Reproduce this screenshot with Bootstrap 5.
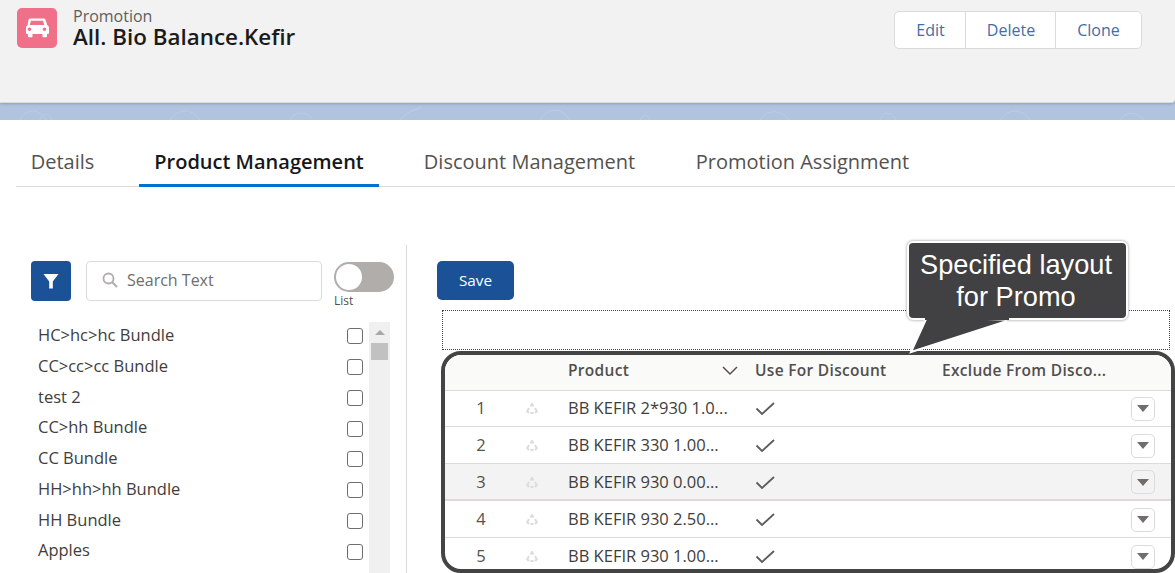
<!DOCTYPE html>
<html lang="en">
<head>
    <meta charset="UTF-8">
    <meta name="viewport" content="width=device-width, initial-scale=1">
    <title>Promotion - All. Bio Balance.Kefir</title>
    <link href="https://cdn.jsdelivr.net/npm/bootstrap@5.3.0/dist/css/bootstrap.min.css" rel="stylesheet">
    <style>
        html, body {
            height: 573px;
            overflow: hidden;
        }
        body {
            position: relative;
            background: #fff;
            color: #3e3e3c;
            font-family: "Open Sans", "Liberation Sans", sans-serif;
            font-size: 14px;
        }
        .band {
            height: 120px;
            background: #b0c4df;
            overflow: hidden;
        }
        .record-head {
            height: 103px;
            background: #f2f2f2;
            border-bottom: 1px solid #dddbda;
            border-bottom-right-radius: 4px;
            box-shadow: 0 1px 3px rgba(0, 0, 0, .2);
            padding: 8px 33px 0 17px;
        }
        .record-icon {
            width: 40px;
            height: 40px;
            background: #f0708a;
            border-radius: 5px;
        }
        .record-type {
            font-size: 16px;
            line-height: 17px;
            color: #5f5e5c;
        }
        .record-name {
            font-size: 22.4px;
            font-weight: 600;
            line-height: 24px;
            color: #1b1b1b;
        }
        .head-btns {
            margin-top: 3px;
            background: #fff;
            border: 1px solid #dddbda;
            border-radius: 5px;
            height: 38px;
        }
        .head-btns .btn {
            color: #3f6ea8;
            font-size: 16px;
            background: none;
            border: 0;
            border-left: 1px solid #dddbda;
            border-radius: 0;
            padding: 0;
            height: 36px;
        }
        .head-btns .btn:first-child {
            border-left: 0;
        }
        .tabs-bar {
            margin: 0 0 0 16px;
            height: 67px;
            border-bottom: 1px solid #dddbda;
            align-items: flex-end;
        }
        .tab-item {
            height: 46px;
            padding-top: 12px;
            font-size: 20px;
            line-height: 20px;
            color: #54524f;
            text-align: center;
        }
        .tab-on {
            color: #16171a;
            font-weight: 600;
            border-bottom: 3px solid #0070d2;
            margin-bottom: -1px;
            height: 47px;
        }
        .work-area {
            margin-top: 58px;
            height: 328px;
        }
        .left-pane {
            width: 407px;
            padding: 16px 12px 0 31px;
            border-right: 1px solid #dddbda;
            flex: none;
        }
        .filter-btn {
            width: 40px;
            height: 40px;
            background: #1b5297;
            border-radius: 4px;
            flex: none;
        }
        .search-box {
            width: 236px;
            height: 40px;
            margin-left: 15px;
            border: 1px solid #dddbda;
            border-radius: 4px;
            padding: 0 0 2px 15px;
            color: #706e6b;
            font-size: 16px;
            flex: none;
        }
        .search-box svg {
            margin-right: 9px;
        }
        .toggle-wrap {
            margin-left: 12px;
            width: 60px;
            flex: none;
        }
        .toggle-track {
            width: 60px;
            height: 30px;
            margin-top: 1px;
            background: #b0adab;
            border-radius: 15px;
            padding: 2px;
        }
        .toggle-knob {
            width: 26px;
            height: 26px;
            background: #fff;
            border-radius: 50%;
        }
        .toggle-label {
            font-size: 12px;
            line-height: 14px;
            margin-top: 2px;
            color: #54524f;
        }
        .bundle-wrap {
            margin-top: 14px;
            height: 258px;
            overflow: hidden;
        }
        .bundle-list {
            width: 338px;
            margin-top: -1px;
            padding: 0 0 0 7px;
            flex: none;
        }
        .bundle-row {
            height: 30.75px;
            font-size: 16.5px;
            color: #3e3e3c;
            padding-right: 6px;
        }
        .bundle-row span {
            position: relative;
            top: -1px;
        }
        .fake-check {
            width: 16px;
            height: 16px;
            border: 1px solid #706e6b;
            border-radius: 3px;
            background: #fff;
        }
        .scroll-rail {
            width: 21px;
            background: #f0f0f0;
            padding: 8px 2px 0;
            flex: none;
        }
        .scroll-arrow {
            width: 0;
            height: 0;
            margin: 0 auto 8px;
            border-left: 5px solid transparent;
            border-right: 5px solid transparent;
            border-bottom: 5px solid #a8a8a8;
        }
        .scroll-thumb {
            height: 17px;
            background: #c1c1c1;
        }
        .right-pane {
            flex: 1;
            padding: 16px 0 0 30px;
            min-width: 0;
        }
        .save-btn {
            width: 77px;
            height: 39px;
            background: #1b5297;
            border: 0;
            border-radius: 5px;
            color: #fff;
            font-size: 15.300px;
            font-weight: 500;
            padding: 0;
        }
        .dotted-box {
            margin: 10px 5px 0 5px;
            height: 40px;
            border: 1px dotted #3e3e3c;
        }
        .grid-frame {
            margin: 1px 0 0 4px;
            height: 222px;
            border: 4px solid #444;
            border-radius: 20px;
            overflow: hidden;
        }
        .grid-frame .table {
            table-layout: fixed;
            width: 100%;
            margin: 0;
            color: #3e3e3c;
        }
        .grid-frame th, .grid-frame td {
            padding: 0;
            border-bottom: 1px solid #dddbda;
            vertical-align: middle;
            white-space: nowrap;
            font-size: 16.5px;
        }
        .grid-frame th {
            height: 35px;
            padding-bottom: 3px;
            background: #fafaf9;
            font-size: 15.500px;
            font-weight: 600;
            color: #514f4d;
            letter-spacing: .3px;
            box-shadow: none;
        }
        .grid-frame td {
            height: 37px;
            padding-top: 2px;
        }
        .grid-frame tbody tr:first-child td {
            height: 36px;
            padding-top: 1px;
        }
        .grid-frame tr.row-hot td {
            background: #f3f3f3;
            border-top: 1px solid #dddbda;
            border-bottom-width: 2px;
        }
        .row-num {
            text-align: center;
            color: #54524f;
        }
        .row-menu {
            width: 24px;
            height: 24px;
            margin-left: 5px;
            border: 1px solid #dddbda;
            border-radius: 5px;
            background: #fff;
        }
        .row-hot .row-menu {
            background: #f3f3f3;
        }
        .row-menu span {
            width: 0;
            height: 0;
            border-left: 6px solid transparent;
            border-right: 6px solid transparent;
            border-top: 7px solid #706e6b;
        }
        .recycle-mark {
            margin-left: 9px;
        }
        .sort-mark {
            margin-right: 17px;
        }
        .callout {
            position: absolute;
            left: 907px;
            top: 241px;
            width: 221px;
            height: 79px;
            background: #414042;
            border: 2px solid #fff;
            border-radius: 6px;
            box-shadow: 0 0 3px rgba(0, 0, 0, .45);
            color: #fff;
            font-family: "Liberation Sans", Arial, sans-serif;
            font-size: 27.2px;
            line-height: 32px;
            text-align: center;
            padding: 6px 3px 0 0;
        }
        .callout-tail {
            position: absolute;
            left: 905px;
            top: 315px;
            width: 110px;
            height: 42px;
        }
    </style>
</head>
<body>

<div class="band">
    <div class="record-head d-flex justify-content-between">
        <div class="d-flex">
            <div class="record-icon d-flex align-items-center justify-content-center">
                <svg width="26" height="24" viewBox="0 0 26 24"><path fill="#fff" d="M6.500 2.500h13c1 0 1.800.6 2.100 1.500l1.700 5.200c1.100.4 1.700 1.300 1.700 2.500v5c0 .8-.5 1.300-1.200 1.300h-.8v2.200c0 .6-.5 1-1 1h-2.500c-.6 0-1-.4-1-1V18H8.500v2.200c0 .6-.4 1-1 1H5c-.5 0-1-.4-1-1V18h-.8c-.7 0-1.200-.5-1.200-1.300v-5c0-1.200.6-2.100 1.700-2.500L4.400 4c.3-.9 1.100-1.500 2.100-1.500zM7 4.800 5.700 9h14.600L19 4.800zM5.500 11.500a1.800 1.800 0 1 0 0 3.600 1.800 1.800 0 0 0 0-3.600zm15 0a1.800 1.800 0 1 0 0 3.600 1.800 1.800 0 0 0 0-3.600z" fill-rule="evenodd"/></svg>
            </div>
            <div class="ms-3">
                <div class="record-type">Promotion</div>
                <div class="record-name">All. Bio Balance.Kefir</div>
            </div>
        </div>
        <div class="head-btns btn-group align-self-start" role="group">
            <button class="btn" style="width:71px">Edit</button>
            <button class="btn" style="width:91px">Delete</button>
            <button class="btn" style="width:86px">Clone</button>
        </div>
    </div>
    <svg class="d-block" width="1175" height="17"><g fill="none" stroke="#bccde4" stroke-width="1"><path d="M20 17c5-12 20-12 26 0M40 17c3-8 10-8 12 0M170 17c10-14 24-10 30 0M290 17c4-8 14-10 22-2M400 17c10-12 16-8 22-14M540 17c8-12 20-14 30 0M640 17c4-6 8-6 10 0M760 17c6-10 18-12 30 0M880 17c4-10 12-8 16 0M1000 17c8-12 22-12 30 0M1120 17c6-8 14-10 24 0"/></g></svg>
</div>

<div class="tabs-bar d-flex">
    <div class="tab-item" style="width:123px;padding-right:30px">Details</div>
    <div class="tab-item tab-on" style="width:240px">Product Management</div>
    <div class="tab-item" style="width:301px">Discount Management</div>
    <div class="tab-item" style="width:245px">Promotion Assignment</div>
</div>

<div class="work-area d-flex">
    <div class="left-pane">
        <div class="d-flex">
            <div class="filter-btn d-flex align-items-center justify-content-center">
                <svg width="16" height="16" viewBox="0 0 16 16"><path fill="#fff" d="M.5 1h15L9.800 8.500V15.500H6.200V8.500z"/></svg>
            </div>
            <div class="search-box d-flex align-items-center">
                <svg width="16" height="16" viewBox="0 0 16 16"><circle cx="6.500" cy="6.500" r="5" fill="none" stroke="#b0adab" stroke-width="1.800"/><path d="M10 10l5 5" stroke="#b0adab" stroke-width="2"/></svg>
                <span>Search Text</span>
            </div>
            <div class="toggle-wrap">
                <div class="toggle-track"><div class="toggle-knob"></div></div>
                <div class="toggle-label">List</div>
            </div>
        </div>
        <div class="bundle-wrap d-flex">
            <div class="bundle-list">
                <div class="bundle-row d-flex align-items-center justify-content-between"><span>HC&gt;hc&gt;hc Bundle</span><div class="fake-check"></div></div>
                <div class="bundle-row d-flex align-items-center justify-content-between"><span>CC&gt;cc&gt;cc Bundle</span><div class="fake-check"></div></div>
                <div class="bundle-row d-flex align-items-center justify-content-between"><span>test 2</span><div class="fake-check"></div></div>
                <div class="bundle-row d-flex align-items-center justify-content-between"><span>CC&gt;hh Bundle</span><div class="fake-check"></div></div>
                <div class="bundle-row d-flex align-items-center justify-content-between"><span>CC Bundle</span><div class="fake-check"></div></div>
                <div class="bundle-row d-flex align-items-center justify-content-between"><span>HH&gt;hh&gt;hh Bundle</span><div class="fake-check"></div></div>
                <div class="bundle-row d-flex align-items-center justify-content-between"><span>HH Bundle</span><div class="fake-check"></div></div>
                <div class="bundle-row d-flex align-items-center justify-content-between"><span>Apples</span><div class="fake-check"></div></div>
            </div>
            <div class="scroll-rail">
                <div class="scroll-arrow"></div>
                <div class="scroll-thumb"></div>
            </div>
        </div>
    </div>
    <div class="right-pane">
        <button class="save-btn d-block">Save</button>
        <div class="dotted-box"></div>
        <div class="grid-frame">
            <table class="table">
                <colgroup><col style="width:72px"><col style="width:51px"><col style="width:187px"><col style="width:187px"><col style="width:184px"><col></colgroup>
                <thead>
                    <tr>
                        <th></th>
                        <th></th>
                        <th><div class="d-flex justify-content-between align-items-center"><span>Product</span><svg class="sort-mark" width="16" height="10" viewBox="0 0 16 10"><path d="M1 1l7 7 7-7" fill="none" stroke="#54524f" stroke-width="1.500"/></svg></div></th>
                        <th>Use For Discount</th>
                        <th>Exclude From Disco...</th>
                        <th></th>
                    </tr>
                </thead>
                <tbody id="rows"></tbody>
            </table>
        </div>
    </div>
</div>

<div class="callout">Specified layout<br>for Promo</div>
<svg class="callout-tail" viewBox="0 0 110 42"><path d="M22 2 6 37 102 6" fill="#414042" stroke="#fff" stroke-width="2"/><path d="M20 0h84v5H20z" fill="#414042"/></svg>

<script>
    var products = ["BB KEFIR 2*930 1.0...", "BB KEFIR 330 1.00...", "BB KEFIR 930 0.00...", "BB KEFIR 930 2.50...", "BB KEFIR 930 1.00..."];
    var html = "";
    products.forEach(function (name, i) {
        html += '<tr' + (i === 2 ? ' class="row-hot"' : '') + '>' +
            '<td class="row-num">' + (i + 1) + '</td>' +
            '<td><svg class="d-block recycle-mark" width="12" height="11" viewBox="0 0 12 11"><path d="M4.500 3.500 6 1l1.500 2.500M9 5l1.800 3.200L9 10M3 5 1.200 8.200 3 10M4.500 10h3" fill="none" stroke="#dcdcdc" stroke-width="2"/></svg></td>' +
            '<td>' + name + '</td>' +
            '<td><svg class="d-block" width="20" height="15" viewBox="0 0 20 15"><path d="M1.500 7.500 7 13 19 2" fill="none" stroke="#5c5c5c" stroke-width="1.800"/></svg></td>' +
            '<td></td>' +
            '<td><div class="row-menu d-flex align-items-center justify-content-center"><span></span></div></td>' +
            '</tr>';
    });
    document.getElementById("rows").innerHTML = html;
</script>

<script src="https://cdn.jsdelivr.net/npm/bootstrap@5.3.0/dist/js/bootstrap.bundle.min.js"></script>
</body>
</html>
